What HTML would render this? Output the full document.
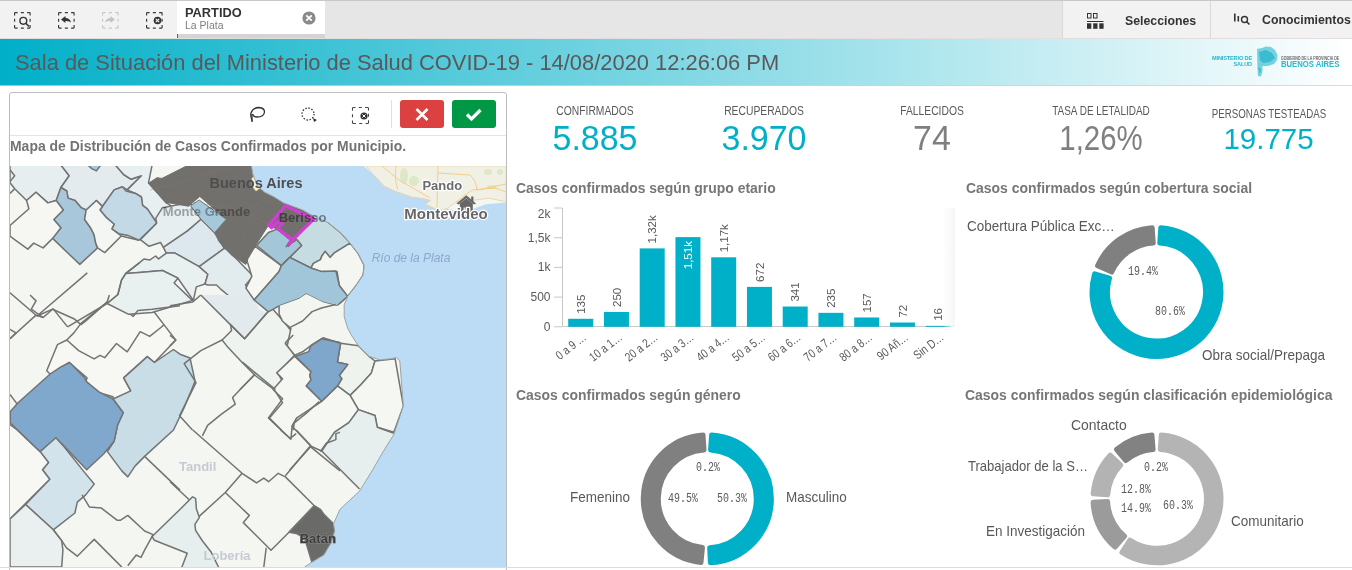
<!DOCTYPE html><html><head><meta charset="utf-8"><style>
*{margin:0;padding:0;box-sizing:border-box}
html,body{width:1352px;height:570px;overflow:hidden;background:#fff;font-family:"Liberation Sans",sans-serif;color:#595959}
.a{position:absolute;white-space:nowrap}
.kl{font-size:12px;color:#595959;text-align:center;transform:scaleX(0.86);transform-origin:center}
.kv{font-size:34px;text-align:center;line-height:1}
.ct{font-size:15px;font-weight:bold;color:#767676;transform:scaleX(0.93);transform-origin:left top}
.lg{font-size:14.5px;color:#595959;transform:scaleX(0.93);transform-origin:left top}
svg{position:absolute;left:0;top:0;overflow:visible}
</style></head><body><div class="a" style="left:0;top:0;width:1352px;height:39px;background:#e6e6e6;border-top:1px solid #c8c8c8"></div><div class="a" style="left:0;top:1px;width:177px;height:37px;background:#f2f2f2"></div><div class="a" style="left:177px;top:1px;width:148px;height:33px;background:#fff"></div><div class="a" style="left:177px;top:34px;width:148px;height:4px;background:#d4d4d4"></div><div class="a" style="left:177px;top:34px;width:1px;height:4px;background:#009845"></div><div class="a" style="left:1062px;top:1px;width:290px;height:37px;background:#f2f2f2;border-left:1px solid #d9d9d9"></div><div class="a" style="left:1210px;top:1px;width:1px;height:37px;background:#d9d9d9"></div><div class="a" style="left:0;top:38px;width:1352px;height:1px;background:#e3dedd"></div><svg width="1352" height="40"><path d="M14.6 12.6 L30.1 12.6 M30.1 12.6 L30.1 28.1 M30.1 28.1 L14.6 28.1 M14.6 28.1 L14.6 12.6" fill="none" stroke="#3a3a3a" stroke-width="1.15" stroke-dasharray="3 3.25"/><circle cx="23.3" cy="20.8" r="3.4" fill="none" stroke="#333" stroke-width="1.4"/><line x1="25.8" y1="23.3" x2="29" y2="26.5" stroke="#333" stroke-width="1.6"/><path d="M58.6 12.6 L74.1 12.6 M74.1 12.6 L74.1 28.1 M74.1 28.1 L58.6 28.1 M58.6 28.1 L58.6 12.6" fill="none" stroke="#3a3a3a" stroke-width="1.15" stroke-dasharray="3 3.25"/><path d="M61 19.5 L65.5 16 L65.5 18 Q70 18 71 22.5 Q69 20.5 65.5 21 L65.5 23 Z" fill="#333"/><path d="M102.6 12.6 L118.1 12.6 M118.1 12.6 L118.1 28.1 M118.1 28.1 L102.6 28.1 M102.6 28.1 L102.6 12.6" fill="none" stroke="#c8c8c8" stroke-width="1.15" stroke-dasharray="3 3.25"/><path d="M115 19.5 L110.5 16 L110.5 18 Q106 18 105 22.5 Q107 20.5 110.5 21 L110.5 23 Z" fill="#c4c4c4"/><path d="M146.6 12.6 L162.1 12.6 M162.1 12.6 L162.1 28.1 M162.1 28.1 L146.6 28.1 M146.6 28.1 L146.6 12.6" fill="none" stroke="#3a3a3a" stroke-width="1.15" stroke-dasharray="3 3.25"/><circle cx="157.5" cy="20.5" r="3.8" fill="#333"/><path d="M155.8 18.8 L159.2 22.2 M159.2 18.8 L155.8 22.2" stroke="#f2f2f2" stroke-width="1.2"/><circle cx="309" cy="18" r="6.6" fill="#8a8a8a"/><path d="M306.3 15.3 L311.7 20.7 M311.7 15.3 L306.3 20.7" stroke="#fff" stroke-width="1.8"/><rect x="1087.5" y="13.5" width="3.5" height="4.5" fill="none" stroke="#333" stroke-width="1"/><rect x="1093.5" y="13.5" width="3.5" height="4.5" fill="none" stroke="#333" stroke-width="1"/><rect x="1087" y="21" width="16.5" height="1" fill="#333"/><rect x="1087" y="23.3" width="4.3" height="5.5" fill="#333"/><rect x="1093.2" y="23.3" width="4.3" height="5.5" fill="#333"/><rect x="1099.3" y="23.3" width="4.3" height="5.5" fill="#333"/><rect x="1234" y="13.5" width="1.6" height="8" fill="#333"/><rect x="1237.5" y="16" width="1.6" height="5.5" fill="#333"/><circle cx="1244.5" cy="19.5" r="3" fill="none" stroke="#333" stroke-width="1.4"/><line x1="1246.6" y1="21.6" x2="1249.5" y2="24.5" stroke="#333" stroke-width="1.5"/></svg><div class="a" style="left:185px;top:5px;font-size:12.8px;font-weight:bold;color:#333">PARTIDO</div><div class="a" style="left:185px;top:19px;font-size:10.5px;color:#808080">La Plata</div><div class="a" style="left:1125px;top:14px;font-size:12.3px;font-weight:bold;color:#333">Selecciones</div><div class="a" style="left:1262px;top:13px;font-size:12.3px;font-weight:bold;color:#333">Conocimientos</div><div class="a" style="left:0;top:39px;width:1352px;height:46px;background:linear-gradient(90deg,#00afc8 0%,#ffffff 100%)"></div><div class="a" style="left:0;top:85px;width:1352px;height:1px;background:linear-gradient(90deg,#8fd0dc,#dcdcdc)"></div><div class="a" style="left:1205px;top:55px;width:47px;text-align:right;font-size:5.6px;line-height:6.2px;font-weight:bold;color:#2ab7ca;letter-spacing:-0.15px">MINISTERIO DE<br>SALUD</div><svg width="1352" height="90"><path d="M1257 49 L1262 48 L1266 46.5 L1271 47 L1275 50 L1277.5 55 L1277 60 L1274 64 L1268 66 L1262.5 66 L1262.5 71 L1261 76.5 L1258 76 L1257.5 68 Z" fill="#74d2de"/><path d="M1259 52 L1266 50 L1272 53 L1275 58 L1270 62 L1263 63 L1260 60 Z M1258 67 L1261 69 L1260 74 Z" fill="#2ab7ca" opacity="0.8"/></svg><div class="a" style="left:1281px;top:55.5px;font-size:4.5px;font-weight:bold;color:#666;transform:scaleX(0.8);transform-origin:left top">GOBIERNO DE LA PROVINCIA DE</div><div class="a" style="left:1281px;top:59.5px;font-size:8.2px;font-weight:bold;color:#2ab7ca;transform:scaleX(0.94);transform-origin:left top">BUENOS AIRES</div><div class="a" style="left:15px;top:50px;font-size:21.9px;color:#595959">Sala de Situación del Ministerio de Salud COVID-19 - 14/08/2020 12:26:06 PM</div><div class="a" style="left:9px;top:92px;width:498px;height:480px;border:1px solid #bdbdbd;border-radius:3px;background:#fff"></div>
<div class="a" style="left:10px;top:135px;width:496px;height:1px;background:#e3e3e3"></div>
<div class="a" style="left:391px;top:100px;width:1px;height:28px;background:#e0e0e0"></div>
<div class="a" style="left:400px;top:100px;width:44px;height:28px;background:#dc4040;border-radius:3px"></div>
<div class="a" style="left:452px;top:100px;width:44px;height:28px;background:#009845;border-radius:3px"></div>
<div class="a" style="left:10px;top:137px;font-size:15px;font-weight:bold;color:#737373;transform:scaleX(0.93);transform-origin:left top">Mapa de Distribución de Casos Confirmados por Municipio.</div>
<svg width="1352" height="570"><path d="M416.5 109 L427.5 120 M427.5 109 L416.5 120" stroke="#fff" stroke-width="2.6"/><path d="M467 114.5 L471.5 119 L480.5 110" fill="none" stroke="#fff" stroke-width="3.2" stroke-linejoin="miter"/><path d="M252.5 121 Q250 116 251 113 Q253 107.5 259 107.5 Q264.5 108 264.5 112 Q264 117 257 117 Q253.5 117 252.5 114" fill="none" stroke="#333" stroke-width="1.3"/><path d="M252 114 L252 122" stroke="#333" stroke-width="1.3"/><circle cx="308" cy="114" r="6" fill="none" stroke="#333" stroke-width="1.3" stroke-dasharray="1.5 1.6"/><path d="M313 118 L317 120 L314 122 Z" fill="#333"/><path d="M352.5 107.5 L368.5 107.5" stroke="#444" stroke-width="1.1" stroke-dasharray="3 3.33" fill="none"/><path d="M368.5 107.5 L368.5 123.5" stroke="#444" stroke-width="1.1" stroke-dasharray="3 3.33" fill="none"/><path d="M368.5 123.5 L352.5 123.5" stroke="#444" stroke-width="1.1" stroke-dasharray="3 3.33" fill="none"/><path d="M352.5 123.5 L352.5 107.5" stroke="#444" stroke-width="1.1" stroke-dasharray="3 3.33" fill="none"/><circle cx="364" cy="116" r="3.6" fill="#333"/><path d="M362.4 114.4 L365.6 117.6 M365.6 114.4 L362.4 117.6" stroke="#fff" stroke-width="1"/></svg>
<svg width="1352" height="570"><defs><clipPath id="mc"><rect x="10" y="166" width="496" height="401"/></clipPath></defs><g clip-path="url(#mc)"><rect x="10" y="166" width="496" height="401" fill="#f4f6f2"/><polygon points="10.0,165.0 60.9,165.0 69.2,175.7 60.9,187.5 56.2,200.5 47.9,202.9 36.0,192.2 26.6,200.5 14.7,188.7 10.0,182.8" fill="#e7eef0" stroke="#737373" stroke-width="1.5" stroke-linejoin="round"/><polygon points="60.9,165.0 115.4,165.0 123.6,174.5 130.8,179.2 141.4,175.7 127.2,189.9 122.5,186.8 114.2,189.9 102.3,206.4 96.4,200.5 86.2,210.0 81.0,207.6 75.1,200.5 68.0,198.1 66.8,191.0 60.9,187.5 69.2,175.7" fill="#e3ebee" stroke="#737373" stroke-width="1.5" stroke-linejoin="round"/><polygon points="115.4,165.0 152.1,165.0 148.5,182.8 166.3,202.9 180.0,211.2 180.0,215.9 161.5,215.9 156.8,223.0 147.3,208.8 142.6,205.3 141.4,197.0 135.5,193.4 127.2,189.9 141.4,175.7 130.8,179.2 123.6,174.5" fill="#e8eff0" stroke="#737373" stroke-width="1.5" stroke-linejoin="round"/><polygon points="60.9,187.5 66.8,191.0 68.0,198.1 75.1,200.5 81.0,207.6 86.2,210.0 84.6,219.5 90.5,227.7 94.1,234.8 95.7,243.1 97.6,247.9 79.8,264.4 52.6,238.4 60.9,227.7 53.8,219.5 63.3,210.0 56.2,200.5" fill="#a9c7da" stroke="#737373" stroke-width="1.5" stroke-linejoin="round"/><polygon points="100.0,210.0 114.2,189.9 122.5,186.8 126.0,191.0 135.5,193.4 141.4,197.0 142.6,205.3 147.3,208.8 156.8,223.0 139.0,240.3 128.4,235.6 118.9,233.7 111.8,228.9 114.2,224.2 105.9,217.1" fill="#c3d9e5" stroke="#737373" stroke-width="1.5" stroke-linejoin="round"/><polygon points="86.2,210.0 96.4,200.5 102.3,206.4 100.0,210.0 105.9,217.1 114.2,224.2 111.8,228.9 121.3,236.0 104.7,252.6 97.6,247.9 95.7,243.1 94.1,234.8 90.5,227.7 84.6,219.5" fill="#f3f6f2" stroke="#737373" stroke-width="1.5" stroke-linejoin="round"/><polygon points="26.6,200.5 36.0,192.2 47.9,202.9 56.2,200.5 63.3,210.0 53.8,219.5 60.9,227.7 52.6,238.4 43.1,247.9 33.7,243.1 27.8,249.1 14.7,239.6 10.0,236.0 10.0,225.4 28.9,208.8" fill="#f6f7f3" stroke="#737373" stroke-width="1.5" stroke-linejoin="round"/><polygon points="140.3,239.6 156.7,223.2 155.7,218.3 162.5,207.7 177.9,204.8 190.5,202.9 201.1,219.3 187.6,230.9 163.4,247.3 160.5,242.5 149.0,246.3" fill="#e6eef0" stroke="#737373" stroke-width="1.5" stroke-linejoin="round"/><polygon points="163.4,247.3 187.6,230.9 201.1,219.3 214.6,232.8 224.3,248.3 199.2,266.6 175.0,253.1 166.3,253.1" fill="#dce8ee" stroke="#737373" stroke-width="1.5" stroke-linejoin="round"/><polygon points="139.3,262.8 144.1,258.9 149.9,259.9 155.7,256.0 158.6,258.9 166.3,253.1 175.0,253.1 199.2,266.6 207.9,274.3 205.0,284.0 196.3,286.9 193.4,300.4 177.9,278.2 162.5,270.5 139.3,272.4 125.8,273.4" fill="#e9f0f0" stroke="#737373" stroke-width="1.5" stroke-linejoin="round"/><polygon points="199.2,266.6 224.3,248.3 228.1,250.2 253.2,276.3 245.5,285.0 253.2,296.5 243.6,300.4 232.0,298.5 220.4,288.8 216.5,285.0 207.9,285.0 205.0,284.0 207.9,274.3" fill="#e2ecef" stroke="#737373" stroke-width="1.5" stroke-linejoin="round"/><polygon points="46.7,370.8 57.4,344.7 66.8,340.0 73.9,332.9 81.0,323.4 107.1,302.1 118.9,304.5 133.1,316.3 137.9,310.4 152.1,309.2 163.9,324.6 175.7,340.0 154.4,362.5 147.3,356.6 123.6,377.9 130.8,390.9 114.2,400.4 113.0,396.8 97.6,392.1 85.8,381.4 87.0,377.9 69.2,362.5 50.3,374.3" fill="#f7f8f4" stroke="#737373" stroke-width="1.5" stroke-linejoin="round"/><polygon points="40.1,451.6 55.7,437.2 64.1,446.8 83.3,470.9 94.2,484.1 85.7,494.9 77.3,502.1 74.9,513.0 53.3,529.8 25.6,504.5 49.7,479.3 42.5,469.7 48.5,462.5" fill="#d3e3eb" stroke="#737373" stroke-width="1.5" stroke-linejoin="round"/><polygon points="7.6,422.8 17.2,430.0 40.1,451.6 48.5,462.5 42.5,469.7 49.7,479.3 10.0,519.0 7.6,521.4" fill="#f7f8f4" stroke="#737373" stroke-width="1.5" stroke-linejoin="round"/><polygon points="10.0,519.0 25.6,504.5 53.3,529.8 61.7,540.6 62.9,550.2 61.7,567.1 10.0,567.1" fill="#e9f0ef" stroke="#737373" stroke-width="1.5" stroke-linejoin="round"/><polygon points="123.7,377.9 147.3,356.6 154.4,362.5 173.4,349.5 180.0,354.2 190.0,358.0 195.1,381.4 184.1,407.7 173.5,430.0 144.6,456.4 135.0,466.1 127.8,476.9 121.8,470.9 107.4,451.6 114.1,441.3 117.5,425.3 123.2,412.7 113.0,399.0 130.8,390.9" fill="#c8dde6" stroke="#737373" stroke-width="1.5" stroke-linejoin="round"/><polygon points="10.3,411.6 18.3,402.5 50.2,374.0 60.5,367.1 69.6,362.5 84.4,377.4 86.7,381.9 99.3,392.2 113.0,399.0 123.2,412.7 117.5,425.3 114.1,441.3 103.8,453.8 86.7,469.8 62.8,444.7 55.9,437.8 40.0,451.5 10.3,423.0" fill="#80a8cc" stroke="#737373" stroke-width="1.5" stroke-linejoin="round"/><polygon points="200.8,295.0 254.1,295.0 258.8,309.2 267.1,312.8 244.6,338.8 230.4,324.6" fill="#e2eaed"/><polygon points="222.1,340.0 231.6,330.5 230.4,324.6 244.6,338.8 267.1,312.8 271.8,308.0 281.3,318.7 293.1,332.9 286.0,342.4 294.3,355.4 277.7,373.1 282.5,381.4 274.2,389.7 255.2,375.5 242.2,362.5 226.8,345.9" fill="#eef3ef" stroke="#737373" stroke-width="1.5" stroke-linejoin="round"/><polygon points="278.9,311.6 286.0,302.1 299.0,295.0 307.3,295.0 316.8,302.1 340.0,304.5 340.0,328.1 321.5,338.8 312.1,344.7 302.6,351.8 294.3,355.4 286.0,342.4 293.1,332.9" fill="#f4f6f1"/><polygon points="244.7,255.0 255.4,246.7 281.4,265.6 279.1,271.6 254.2,300.0 245.9,288.1 251.8,276.3 247.1,260.9" fill="#f6f7f3" stroke="#737373" stroke-width="1.5" stroke-linejoin="round"/><polygon points="311.0,215.2 313.6,211.2 328.8,223.0 341.8,233.7 350.1,243.1 334.7,252.6 330.0,257.4 325.2,251.4 321.7,256.2 320.5,259.7 313.4,263.3 311.0,268.0 289.7,257.4 301.6,245.5 296.8,239.6 290.9,239.6 286.2,246.7" fill="#c5dce3" stroke="#737373" stroke-width="1.5" stroke-linejoin="round"/><polygon points="311.0,268.0 313.4,263.3 320.5,259.7 321.7,256.2 325.2,251.4 330.0,257.4 334.7,252.6 350.1,243.1 358.4,253.8 364.3,265.6 363.1,275.1 356.0,285.8 347.7,296.4 339.4,285.8 337.1,271.6 321.7,271.6" fill="#f4f6f1" stroke="#737373" stroke-width="1.5" stroke-linejoin="round"/><polygon points="256.6,245.5 268.4,232.5 277.9,228.9 290.9,239.6 286.2,246.7 296.8,239.6 301.6,245.5 281.4,265.6" fill="#a3c6d9" stroke="#737373" stroke-width="1.5" stroke-linejoin="round"/><polygon points="254.2,300.0 279.1,271.6 281.4,265.6 289.7,257.4 311.0,268.0 321.7,271.6 335.9,271.1 339.4,285.8 347.7,296.4 337.1,305.9 322.9,302.3 306.3,294.1 299.2,298.8 279.1,305.9 268.4,311.8" fill="#a2c6d9" stroke="#737373" stroke-width="1.5" stroke-linejoin="round"/><polygon points="279.1,305.9 299.2,298.8 306.3,294.1 322.9,302.3 337.1,305.9 344.2,302.3 344.2,316.5 347.7,328.4 353.6,340.2 357.2,345.0 287.4,345.0 290.9,328.4 282.6,321.3 279.1,314.2" fill="#f3f5f0"/><polygon points="340.6,343.3 358.4,345.7 369.0,356.3 375.0,361.0 371.4,372.9 360.8,384.7 350.1,395.4 337.5,385.9 341.8,378.8 339.4,375.3 347.7,364.6 337.5,362.2" fill="#eef3ee" stroke="#737373" stroke-width="1.5" stroke-linejoin="round"/><polygon points="375.0,361.0 395.1,358.7 403.4,406.0 393.9,432.1 377.3,427.3 375.0,415.5 358.4,409.6 350.1,395.4 360.8,384.7 371.4,372.9" fill="#f5f7f2" stroke="#737373" stroke-width="1.5" stroke-linejoin="round"/><polygon points="276.7,372.9 294.5,356.3 311.0,371.7 309.8,375.3 311.0,380.0 306.3,385.9 321.7,401.3 303.9,415.5 296.8,417.9 292.1,426.2 290.9,439.2 268.4,417.9 282.6,398.9 273.1,389.5 282.6,378.8" fill="#f5f7f2" stroke="#737373" stroke-width="1.5" stroke-linejoin="round"/><polygon points="292.1,426.2 296.8,417.9 321.7,401.3 337.5,385.9 350.1,395.4 358.4,409.6 348.9,422.6 334.7,432.1 321.7,451.0 311.0,446.3" fill="#f5f7f2" stroke="#737373" stroke-width="1.5" stroke-linejoin="round"/><polygon points="321.7,451.0 334.7,432.1 348.9,422.6 358.4,409.6 375.0,415.5 377.3,427.3 393.9,433.3 382.1,453.4 372.6,470.0 359.5,489.0 321.7,451.0" fill="#e6eeee"/><polygon points="322.9,337.8 340.6,343.3 337.5,362.2 347.7,364.6 339.4,375.3 341.8,378.8 337.5,385.9 321.7,401.3 306.3,385.9 311.0,380.0 309.8,375.3 311.0,371.7 295.6,356.3 308.7,351.6 311.0,345.7" fill="#7fa6cb" stroke="#737373" stroke-width="1.5" stroke-linejoin="round"/><polygon points="152.1,536.5 180.4,509.0 192.6,496.8 195.6,498.3 196.4,509.0 199.4,517.4 194.9,524.3 195.6,530.4 202.5,541.0 210.9,551.7 218.5,567.0 218.5,575.0 181.9,575.0 181.9,567.0 187.2,553.2 175.8,548.7 154.4,540.3" fill="#e6eeee" stroke="#737373" stroke-width="1.5" stroke-linejoin="round"/><polygon points="314.3,505.7 320.3,509.3 323.9,514.2 333.5,523.8 334.7,531.0 331.1,543.0 323.9,555.0 311.9,562.2 308.3,550.2 304.6,538.2 296.2,533.4 289.0,532.2" fill="#6a6a68" stroke="#737373" stroke-width="1.5" stroke-linejoin="round"/><polygon points="121.5,280.1 125.8,273.4 139.3,272.4 162.5,270.5 177.9,278.2 174.1,283.0 192.4,300.4 152.1,312.5 128.7,314.3 107.1,303.5 117.9,294.5" fill="#e9f0f0" stroke="#737373" stroke-width="1.5" stroke-linejoin="round"/><polygon points="85.8,163.0 102.3,163.0 96.4,170.9 91.7,168.6" fill="#a9c7da" stroke="#737373" stroke-width="1.5" stroke-linejoin="round"/><polyline points="10.0,169.7 14.7,175.7 10.0,181.6" fill="none" stroke="#737373" stroke-width="1.5" stroke-linejoin="round"/><polyline points="14.7,188.7 10.0,193.4" fill="none" stroke="#737373" stroke-width="1.5" stroke-linejoin="round"/><polyline points="121.3,236.0 139.0,240.3" fill="none" stroke="#737373" stroke-width="1.5" stroke-linejoin="round"/><polyline points="30.1,295.0 36.0,300.9 31.3,309.2 43.1,317.5 52.6,309.2 73.9,318.7 81.0,324.6 85.8,321.0 107.1,302.1 109.4,295.0" fill="none" stroke="#737373" stroke-width="1.5" stroke-linejoin="round"/><polyline points="66.8,340.0 78.7,350.6 94.1,358.9 100.0,355.4 104.7,357.7 116.5,343.5 127.2,351.8 140.2,331.7 149.7,336.4 161.5,327.0 163.9,324.6" fill="none" stroke="#737373" stroke-width="1.5" stroke-linejoin="round"/><polyline points="10.0,338.8 36.0,315.1 43.1,317.5" fill="none" stroke="#737373" stroke-width="1.5" stroke-linejoin="round"/><polyline points="10.0,329.3 15.9,332.9 10.0,338.8" fill="none" stroke="#737373" stroke-width="1.5" stroke-linejoin="round"/><polyline points="133.1,316.3 137.9,310.4 152.1,309.2 180.0,305.7" fill="none" stroke="#737373" stroke-width="1.5" stroke-linejoin="round"/><polyline points="10.0,394.4 17.1,403.9" fill="none" stroke="#737373" stroke-width="1.5" stroke-linejoin="round"/><polyline points="82.1,494.9 89.3,506.9 101.4,508.1 117.0,520.2 120.6,520.2 127.8,515.4 144.6,531.0 153.1,534.6 144.6,550.2 141.0,557.4 136.2,555.0 127.8,565.8" fill="none" stroke="#737373" stroke-width="1.5" stroke-linejoin="round"/><polyline points="53.3,529.8 61.7,540.6 66.5,547.8 77.3,556.2 85.7,547.8 94.2,539.4 121.8,567.1" fill="none" stroke="#737373" stroke-width="1.5" stroke-linejoin="round"/><polyline points="144.6,456.4 180.0,490.1" fill="none" stroke="#737373" stroke-width="1.5" stroke-linejoin="round"/><polyline points="200.8,295.0 230.4,324.6 244.6,338.8 267.1,312.8" fill="none" stroke="#737373" stroke-width="1.5" stroke-linejoin="round"/><polyline points="170.0,305.7 192.5,302.1 200.8,295.0" fill="none" stroke="#737373" stroke-width="1.5" stroke-linejoin="round"/><polyline points="222.1,340.0 200.8,350.6 184.2,363.7 196.0,382.6 179.5,415.8 192.5,430.0" fill="none" stroke="#737373" stroke-width="1.5" stroke-linejoin="round"/><polyline points="255.0,374.0 232.6,397.6 235.3,404.2 220.8,414.7 207.6,425.3 202.4,435.8" fill="none" stroke="#737373" stroke-width="1.5" stroke-linejoin="round"/><polyline points="170.0,335.3 175.9,340.0 170.0,345.9" fill="none" stroke="#737373" stroke-width="1.5" stroke-linejoin="round"/><polyline points="274.2,389.7 282.5,402.7 269.4,418.1 281.3,430.0" fill="none" stroke="#737373" stroke-width="1.5" stroke-linejoin="round"/><polyline points="319.2,401.5 306.1,413.4 294.3,422.9 293.1,430.0" fill="none" stroke="#737373" stroke-width="1.5" stroke-linejoin="round"/><polyline points="288.4,328.1 293.1,325.8 302.6,321.0 312.1,311.6 321.5,308.0 335.7,304.5" fill="none" stroke="#737373" stroke-width="1.5" stroke-linejoin="round"/><polyline points="294.3,355.4 302.6,351.8 312.1,344.7 321.5,338.8 340.0,342.4" fill="none" stroke="#737373" stroke-width="1.5" stroke-linejoin="round"/><polyline points="287.4,345.0 290.9,328.4 282.6,321.3 279.1,314.2 279.1,305.9" fill="none" stroke="#737373" stroke-width="1.5" stroke-linejoin="round"/><polyline points="321.7,451.0 334.7,432.1 348.9,422.6 358.4,409.6 375.0,415.5 377.3,427.3 393.9,433.3" fill="none" stroke="#737373" stroke-width="1.5" stroke-linejoin="round"/><polyline points="285.0,343.3 293.3,335.0" fill="none" stroke="#737373" stroke-width="1.5" stroke-linejoin="round"/><polyline points="285.0,343.3 295.6,356.3" fill="none" stroke="#737373" stroke-width="1.5" stroke-linejoin="round"/><polyline points="242.4,362.2 275.5,389.5" fill="none" stroke="#737373" stroke-width="1.5" stroke-linejoin="round"/><polyline points="254.2,375.3 240.0,389.5" fill="none" stroke="#737373" stroke-width="1.5" stroke-linejoin="round"/><polyline points="311.0,446.3 289.7,470.0" fill="none" stroke="#737373" stroke-width="1.5" stroke-linejoin="round"/><polyline points="321.7,451.0 359.5,489.0" fill="none" stroke="#737373" stroke-width="1.5" stroke-linejoin="round"/><polyline points="192.8,430.0 242.1,473.3 256.6,482.9 263.8,478.1 268.6,481.7 278.2,473.3 285.4,476.9 314.3,505.7" fill="none" stroke="#737373" stroke-width="1.5" stroke-linejoin="round"/><polyline points="285.4,475.7 310.7,445.6 296.2,430.0" fill="none" stroke="#737373" stroke-width="1.5" stroke-linejoin="round"/><polyline points="310.7,446.8 340.0,470.9" fill="none" stroke="#737373" stroke-width="1.5" stroke-linejoin="round"/><polyline points="280.6,430.0 290.2,438.4 296.2,433.6" fill="none" stroke="#737373" stroke-width="1.5" stroke-linejoin="round"/><polyline points="320.3,451.6 326.3,443.2 335.9,439.6 335.9,433.6 340.0,432.4" fill="none" stroke="#737373" stroke-width="1.5" stroke-linejoin="round"/><polyline points="170.0,481.7 189.2,499.7" fill="none" stroke="#737373" stroke-width="1.5" stroke-linejoin="round"/><polyline points="242.1,473.3 225.3,492.5 198.9,516.6" fill="none" stroke="#737373" stroke-width="1.5" stroke-linejoin="round"/><polyline points="225.3,492.5 249.3,515.4 243.3,522.6 271.0,550.2 289.0,532.2 314.3,505.7" fill="none" stroke="#737373" stroke-width="1.5" stroke-linejoin="round"/><polyline points="266.2,547.8 263.8,567.1" fill="none" stroke="#737373" stroke-width="1.5" stroke-linejoin="round"/><polyline points="87.3,272.9 37.0,316.0 10.0,292.7" fill="none" stroke="#737373" stroke-width="1.5" stroke-linejoin="round"/><polyline points="37.0,316.0 53.2,308.9 67.6,326.9" fill="none" stroke="#737373" stroke-width="1.5" stroke-linejoin="round"/><polyline points="67.6,326.9 107.1,303.5 117.9,294.5 121.5,280.1 125.8,273.4 139.3,262.8" fill="none" stroke="#737373" stroke-width="1.5" stroke-linejoin="round"/><polygon points="186.5,166.0 251.5,166.0 252.9,174.5 257.6,186.3 264.7,192.2 274.2,197.0 283.6,202.9 293.1,206.4 302.6,210.0 314.4,218.3 313.2,219.5 288.4,246.7 290.8,240.8 276.5,228.9 268.3,225.4 256.4,244.3 248.1,258.5 245.8,264.4 238.7,259.7 232.7,256.2 223.3,246.7 218.5,240.8 215.0,231.3 226.5,219.8 199.8,196.5 188.5,206.2 170.0,203.0 166.3,202.9 148.4,183.3 157.0,177.7 161.9,178.4" fill="#72706c" stroke="#72706c" stroke-width="1"/><g fill="none" stroke="#8a7a60" stroke-width="0.7" opacity="0.5"><path d="M150 190 Q175 185 200 175 L230 168"/><path d="M215 231 Q240 215 262 200 L290 205"/><path d="M232 256 Q245 240 255 210"/><path d="M180 200 Q210 205 240 210 L270 225"/></g><path d="M252 178 L257 175 L262 180 L260 188 L256 191 L252 186 Z" fill="#f4f1e6" stroke="#f1cf80" stroke-width="0.8"/><polygon points="190.5,205.8 199.2,200.0 226.2,219.3 214.6,232.8 201.1,219.3" fill="#a6c8db" stroke="#737373" stroke-width="1"/><polygon points="251.5,166.0 364.0,166.0 373.4,174.7 386.3,182.1 404.7,187.6 419.4,191.3 426.8,195.0 434.2,202.4 445.2,207.9 459.9,211.6 471.0,209.7 485.7,204.2 506.0,202.4 506.0,567.0 304.6,567.0 304.6,567.0 311.9,562.2 323.9,555.0 331.1,543.0 334.7,531.0 333.5,523.8 340.0,509.3 359.5,491.0 372.6,470.0 382.1,453.4 393.9,434.4 403.4,406.0 399.8,361.0 396.3,357.5 391.5,358.7 379.7,359.9 369.0,356.3 358.4,345.7 351.3,335.0 347.7,328.4 344.2,316.5 344.2,304.7 347.7,296.4 356.0,285.8 363.1,275.1 364.3,265.6 358.4,253.8 350.1,243.1 341.8,233.7 328.8,223.0 311.0,214.7 302.6,210.0 293.1,206.4 283.6,202.9 274.2,197.0 264.7,192.2 257.6,186.3 252.9,174.5 251.5,166.0" fill="#bcdcf6"/><polyline points="251.5,166.0 252.9,174.5 257.6,186.3 264.7,192.2 274.2,197.0 283.6,202.9 293.1,206.4 302.6,210.0 311.0,214.7 328.8,223.0 341.8,233.7 350.1,243.1 358.4,253.8 364.3,265.6 363.1,275.1 356.0,285.8 347.7,296.4 344.2,304.7 344.2,316.5 347.7,328.4 351.3,335.0 358.4,345.7 369.0,356.3 379.7,359.9 391.5,358.7 396.3,357.5 399.8,361.0 403.4,406.0 393.9,434.4 382.1,453.4 372.6,470.0 359.5,491.0 340.0,509.3 333.5,523.8 334.7,531.0 331.1,543.0 323.9,555.0 311.9,562.2 304.6,567.0" fill="none" stroke="#9aa3a6" stroke-width="1"/><polygon points="366.1,165.9 372.3,173.5 384.6,186.4 396.9,191.9 411.6,196.9 423.9,198.7 430.6,200.5 425.1,204.2 433.7,207.9 439.9,210.4 446.0,209.1 455.8,202.4 464.4,200.5 476.7,199.9 489.0,198.1 506.2,201.8 506.2,165.9" fill="#f1f0e5" stroke="#e9cfa0" stroke-width="0.8"/><g fill="#dde8c6"><ellipse cx="404" cy="176" rx="4" ry="8"/><ellipse cx="414" cy="181" rx="5" ry="5"/><ellipse cx="488" cy="172" rx="4" ry="3"/><ellipse cx="492" cy="187" rx="5" ry="2"/><ellipse cx="500" cy="172" rx="3" ry="3"/></g><g fill="none" stroke="#f5c97a" stroke-width="0.9"><path d="M382 166 L399 180 L430 198"/><path d="M396 166 Q394 180 398 190"/><path d="M438 166 L437 208"/><path d="M438 173 L470 175 Q476 180 477 190 L506 184"/><path d="M456 202 L472 190 L495 188 L506 192"/></g><polyline points="288.0,245.4 292.8,239.6 313.6,219.3 285.6,205.8 268.7,225.1 271.6,227.5 278.8,221.2 282.2,223.7 277.4,228.5 291.9,239.1" fill="none" stroke="#cf3fd0" stroke-width="3.3" stroke-linejoin="miter"/><path d="M456.5 203.5 L466.3 195.3 L476 203.5 L474 204.5 L466.3 198.3 L458.5 204.5 Z" fill="#666"/><path d="M459.8 203.5 L466.3 198.5 L472.8 203.5 L472.8 213 L459.8 213 Z" fill="#666"/><rect x="471.2" y="196.5" width="2.2" height="4.5" fill="#666"/><rect x="463.5" y="207.5" width="2" height="3" fill="#ddd"/><rect x="467.3" y="207.5" width="2" height="3" fill="#ddd"/></g><text x="256" y="187.5" font-family="Liberation Sans" font-weight="bold" font-size="14.5" text-anchor="middle" fill="#4e4e4e">Buenos Aires</text><text x="442.3" y="190" font-family="Liberation Sans" font-weight="bold" font-size="13" text-anchor="middle" fill="none" stroke="#fff" stroke-width="2.5" stroke-linejoin="round" >Pando</text><text x="442.3" y="190" font-family="Liberation Sans" font-weight="bold" font-size="13" text-anchor="middle" fill="#6b6b6b" >Pando</text><text x="446" y="218.5" font-family="Liberation Sans" font-weight="bold" font-size="15" text-anchor="middle" fill="none" stroke="#fff" stroke-width="2.5" stroke-linejoin="round" >Montevideo</text><text x="446" y="218.5" font-family="Liberation Sans" font-weight="bold" font-size="15" text-anchor="middle" fill="#666" >Montevideo</text><text x="206.5" y="216.4" font-family="Liberation Sans" font-weight="bold" font-size="13" text-anchor="middle" fill="#a9acb0" style="mix-blend-mode:multiply">Monte Grande</text><text x="302.5" y="221.8" font-family="Liberation Sans" font-weight="bold" font-size="13" text-anchor="middle" fill="#8f9294" style="mix-blend-mode:multiply">Berisso</text><text x="411" y="261.5" font-family="Liberation Sans" font-style="italic" font-size="12" text-anchor="middle" fill="#8ea6cf">Río de la Plata</text><text x="197.7" y="470.5" font-family="Liberation Sans" font-weight="bold" font-size="13" text-anchor="middle" fill="#c6cad2">Tandil</text><text x="227" y="559.5" font-family="Liberation Sans" font-weight="bold" font-size="13" text-anchor="middle" fill="#c6cad2">Lobería</text><text x="317.8" y="542.5" font-family="Liberation Sans" font-weight="bold" font-size="13" text-anchor="middle" fill="none" stroke="#8a8a8a" stroke-width="1.2" stroke-linejoin="round" >Batán</text><text x="317.8" y="542.5" font-family="Liberation Sans" font-weight="bold" font-size="13" text-anchor="middle" fill="#3d3d3d" >Batán</text></svg><div class="a kl" style="left:515px;top:104px;width:160px;transform:scaleX(0.86)">CONFIRMADOS</div><div class="a kv" style="left:515px;top:120px;width:160px;font-size:35px;color:#00b0c9;transform:scaleX(0.97)">5.885</div><div class="a kl" style="left:683.5px;top:104px;width:160px;transform:scaleX(0.86)">RECUPERADOS</div><div class="a kv" style="left:683.5px;top:120px;width:160px;font-size:35px;color:#00b0c9;transform:scaleX(0.97)">3.970</div><div class="a kl" style="left:852px;top:104px;width:160px;transform:scaleX(0.86)">FALLECIDOS</div><div class="a kv" style="left:852px;top:120px;width:160px;font-size:35px;color:#7f7f7f;transform:scaleX(0.97)">74</div><div class="a kl" style="left:1020.5px;top:104px;width:160px;transform:scaleX(0.83)">TASA DE LETALIDAD</div><div class="a kv" style="left:1020.5px;top:120px;width:160px;font-size:35px;color:#7f7f7f;transform:scaleX(0.84)">1,26%</div><div class="a kl" style="left:1188.5px;top:107px;width:160px;transform:scaleX(0.81)">PERSONAS TESTEADAS</div><div class="a kv" style="left:1188.5px;top:124px;width:160px;font-size:29.5px;color:#00b0c9;transform:scaleX(1.0)">19.775</div><div class="a ct" style="left:516px;top:179px">Casos confirmados según grupo etario</div><div class="a ct" style="left:966px;top:179px">Casos confirmados según cobertura social</div><div class="a ct" style="left:516px;top:386px">Casos confirmados según género</div><div class="a ct" style="left:965px;top:386px">Casos confirmados según clasificación epidemiológica</div><svg width="1352" height="570"><line x1="562.5" y1="208" x2="562.5" y2="327" stroke="#c8c8c8" stroke-width="1"/><line x1="562" y1="326.5" x2="954" y2="326.5" stroke="#c8c8c8" stroke-width="1"/><line x1="554" y1="326.8" x2="562" y2="326.8" stroke="#c8c8c8" stroke-width="1"/><text x="550.5" y="330.8" text-anchor="end" font-size="12" fill="#595959">0</text><line x1="554" y1="297.1" x2="562" y2="297.1" stroke="#c8c8c8" stroke-width="1"/><text x="550.5" y="301.1" text-anchor="end" font-size="12" fill="#595959">500</text><line x1="554" y1="267.4" x2="562" y2="267.4" stroke="#c8c8c8" stroke-width="1"/><text x="550.5" y="271.4" text-anchor="end" font-size="12" fill="#595959">1k</text><line x1="554" y1="237.7" x2="562" y2="237.7" stroke="#c8c8c8" stroke-width="1"/><text x="550.5" y="241.7" text-anchor="end" font-size="12" fill="#595959">1,5k</text><line x1="554" y1="208.0" x2="562" y2="208.0" stroke="#c8c8c8" stroke-width="1"/><text x="550.5" y="218.0" text-anchor="end" font-size="12" fill="#595959">2k</text><rect x="568.20" y="318.78" width="25" height="8.02" fill="#00b0c9"/><text transform="translate(584.7,313.781) rotate(-90)" text-anchor="start" font-size="11.5" fill="#595959">135</text><text transform="translate(587.2,338.8) rotate(-38) scale(0.8,1)" text-anchor="end" font-size="12.5" fill="#595959">0 a 9 …</text><rect x="603.95" y="311.95" width="25" height="14.85" fill="#00b0c9"/><text transform="translate(620.5,306.95) rotate(-90)" text-anchor="start" font-size="11.5" fill="#595959">250</text><text transform="translate(623.0,338.8) rotate(-38) scale(0.8,1)" text-anchor="end" font-size="12.5" fill="#595959">10 a 1…</text><rect x="639.70" y="248.39" width="25" height="78.41" fill="#00b0c9"/><text transform="translate(656.2,243.392) rotate(-90)" text-anchor="start" font-size="11.5" fill="#595959">1,32k</text><text transform="translate(658.7,338.8) rotate(-38) scale(0.8,1)" text-anchor="end" font-size="12.5" fill="#595959">20 a 2…</text><rect x="675.45" y="237.11" width="25" height="89.69" fill="#00b0c9"/><text transform="translate(692.0,241.106) rotate(-90)" text-anchor="end" font-size="11.5" fill="#fff">1,51k</text><text transform="translate(694.5,338.8) rotate(-38) scale(0.8,1)" text-anchor="end" font-size="12.5" fill="#595959">30 a 3…</text><rect x="711.20" y="257.30" width="25" height="69.50" fill="#00b0c9"/><text transform="translate(727.7,252.30200000000002) rotate(-90)" text-anchor="start" font-size="11.5" fill="#595959">1,17k</text><text transform="translate(730.2,338.8) rotate(-38) scale(0.8,1)" text-anchor="end" font-size="12.5" fill="#595959">40 a 4…</text><rect x="746.95" y="286.88" width="25" height="39.92" fill="#00b0c9"/><text transform="translate(763.5,281.8832) rotate(-90)" text-anchor="start" font-size="11.5" fill="#595959">672</text><text transform="translate(766.0,338.8) rotate(-38) scale(0.8,1)" text-anchor="end" font-size="12.5" fill="#595959">50 a 5…</text><rect x="782.70" y="306.54" width="25" height="20.26" fill="#00b0c9"/><text transform="translate(799.2,301.5446) rotate(-90)" text-anchor="start" font-size="11.5" fill="#595959">341</text><text transform="translate(801.7,338.8) rotate(-38) scale(0.8,1)" text-anchor="end" font-size="12.5" fill="#595959">60 a 6…</text><rect x="818.45" y="312.84" width="25" height="13.96" fill="#00b0c9"/><text transform="translate(835.0,307.841) rotate(-90)" text-anchor="start" font-size="11.5" fill="#595959">235</text><text transform="translate(837.5,338.8) rotate(-38) scale(0.8,1)" text-anchor="end" font-size="12.5" fill="#595959">70 a 7…</text><rect x="854.20" y="317.47" width="25" height="9.33" fill="#00b0c9"/><text transform="translate(870.7,312.4742) rotate(-90)" text-anchor="start" font-size="11.5" fill="#595959">157</text><text transform="translate(873.2,338.8) rotate(-38) scale(0.8,1)" text-anchor="end" font-size="12.5" fill="#595959">80 a 8…</text><rect x="889.95" y="322.52" width="25" height="4.28" fill="#00b0c9"/><text transform="translate(906.5,317.52320000000003) rotate(-90)" text-anchor="start" font-size="11.5" fill="#595959">72</text><text transform="translate(909.0,338.8) rotate(-38) scale(0.8,1)" text-anchor="end" font-size="12.5" fill="#595959">90 Añ…</text><rect x="925.70" y="325.85" width="25" height="0.95" fill="#00b0c9"/><text transform="translate(942.2,320.8496) rotate(-90)" text-anchor="start" font-size="11.5" fill="#595959">16</text><text transform="translate(944.7,338.8) rotate(-38) scale(0.8,1)" text-anchor="end" font-size="12.5" fill="#595959">Sin D…</text></svg><svg width="1352" height="570"><path d="M1160.82 227.64 A64.5 64.5 0 1 1 1094.60 273.87 L1109.48 278.23 A49.0 49.0 0 1 0 1159.78 243.11 Z" fill="#00b0c9" stroke="#00b0c9" stroke-width="5.0" stroke-linejoin="round"/><path d="M1097.57 265.77 A64.5 64.5 0 0 1 1152.18 227.64 L1153.22 243.11 A49.0 49.0 0 0 0 1111.74 272.07 Z" fill="#808080" stroke="#808080" stroke-width="5.0" stroke-linejoin="round"/><path d="M711.60 434.94 A64.0 64.0 0 0 1 710.40 562.73 L709.67 547.74 A49.0 49.0 0 0 0 710.59 449.91 Z" fill="#00b0c9" stroke="#00b0c9" stroke-width="5.0" stroke-linejoin="round"/><path d="M701.00 562.49 A64.0 64.0 0 0 1 703.00 434.94 L704.01 449.91 A49.0 49.0 0 0 0 702.47 547.56 Z" fill="#808080" stroke="#808080" stroke-width="5.0" stroke-linejoin="round"/><path d="M1161.28 434.94 A64.0 64.0 0 1 1 1121.92 552.33 L1129.86 540.20 A49.5 49.5 0 1 0 1160.31 449.41 Z" fill="#b4b4b4" stroke="#b4b4b4" stroke-width="5.0" stroke-linejoin="round"/><path d="M1115.08 547.16 A64.0 64.0 0 0 1 1093.09 502.28 L1107.57 501.49 A49.5 49.5 0 0 0 1124.58 536.21 Z" fill="#9b9b9b" stroke="#9b9b9b" stroke-width="5.0" stroke-linejoin="round"/><path d="M1093.20 493.72 A64.0 64.0 0 0 1 1110.17 455.18 L1120.78 465.06 A49.5 49.5 0 0 0 1107.66 494.87 Z" fill="#b3b3b3" stroke="#b3b3b3" stroke-width="5.0" stroke-linejoin="round"/><path d="M1116.41 449.32 A64.0 64.0 0 0 1 1151.92 435.00 L1153.07 449.46 A49.5 49.5 0 0 0 1125.61 460.53 Z" fill="#828282" stroke="#828282" stroke-width="5.0" stroke-linejoin="round"/></svg><div class="a" style="left:1128px;top:265px;font-family:'Liberation Mono',monospace;font-size:12px;color:#595959;transform:scaleX(0.83);transform-origin:left center">19.4%</div><div class="a" style="left:1154.5px;top:305px;font-family:'Liberation Mono',monospace;font-size:12px;color:#595959;transform:scaleX(0.83);transform-origin:left center">80.6%</div><div class="a" style="left:695.5px;top:461px;font-family:'Liberation Mono',monospace;font-size:12px;color:#595959;transform:scaleX(0.83);transform-origin:left center">0.2%</div><div class="a" style="left:667.5px;top:491.5px;font-family:'Liberation Mono',monospace;font-size:12px;color:#595959;transform:scaleX(0.83);transform-origin:left center">49.5%</div><div class="a" style="left:717px;top:491.5px;font-family:'Liberation Mono',monospace;font-size:12px;color:#595959;transform:scaleX(0.83);transform-origin:left center">50.3%</div><div class="a" style="left:1144px;top:461px;font-family:'Liberation Mono',monospace;font-size:12px;color:#595959;transform:scaleX(0.83);transform-origin:left center">0.2%</div><div class="a" style="left:1121px;top:482.5px;font-family:'Liberation Mono',monospace;font-size:12px;color:#595959;transform:scaleX(0.83);transform-origin:left center">12.8%</div><div class="a" style="left:1121px;top:502px;font-family:'Liberation Mono',monospace;font-size:12px;color:#595959;transform:scaleX(0.83);transform-origin:left center">14.9%</div><div class="a" style="left:1163px;top:498.5px;font-family:'Liberation Mono',monospace;font-size:12px;color:#595959;transform:scaleX(0.83);transform-origin:left center">60.3%</div><div class="a lg" style="left:967px;top:217.5px;transform:scaleX(0.93)">Cobertura Pública Exc…</div><div class="a lg" style="left:1202px;top:346.5px;transform:scaleX(0.93)">Obra social/Prepaga</div><div class="a lg" style="left:570px;top:488.5px;transform:scaleX(0.93)">Femenino</div><div class="a lg" style="left:786px;top:488.5px;transform:scaleX(0.93)">Masculino</div><div class="a lg" style="left:1071px;top:416.5px;transform:scaleX(0.96)">Contacto</div><div class="a lg" style="left:968px;top:457.5px;transform:scaleX(0.9)">Trabajador de la S…</div><div class="a lg" style="left:986px;top:523.0px;transform:scaleX(0.93)">En Investigación</div><div class="a lg" style="left:1231px;top:513.0px;transform:scaleX(0.93)">Comunitario</div><div class="a" style="left:942px;top:208px;width:13px;height:119px;background:linear-gradient(90deg,rgba(248,248,248,0),#f6f6f6)"></div><div class="a" style="left:0;top:567px;width:1352px;height:1px;background:#dcdcdc"></div></body></html>
